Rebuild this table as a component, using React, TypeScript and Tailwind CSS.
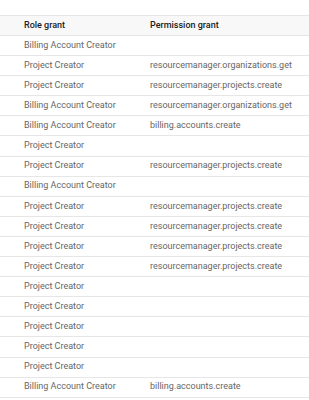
const rows: [string, string][] = [
  ['Billing Account Creator', ''],
  ['Project Creator', 'resourcemanager.organizations.get'],
  ['Project Creator', 'resourcemanager.projects.create'],
  ['Billing Account Creator', 'resourcemanager.organizations.get'],
  ['Billing Account Creator', 'billing.accounts.create'],
  ['Project Creator', ''],
  ['Project Creator', 'resourcemanager.projects.create'],
  ['Billing Account Creator', ''],
  ['Project Creator', 'resourcemanager.projects.create'],
  ['Project Creator', 'resourcemanager.projects.create'],
  ['Project Creator', 'resourcemanager.projects.create'],
  ['Project Creator', 'resourcemanager.projects.create'],
  ['Project Creator', ''],
  ['Project Creator', ''],
  ['Project Creator', ''],
  ['Project Creator', ''],
  ['Project Creator', ''],
  ['Billing Account Creator', 'billing.accounts.create'],
];

export default function App() {
  return (
    <div className="w-[309px] h-[400px] bg-white pt-[15px] overflow-hidden" style={{ fontFamily: 'Roboto, sans-serif' }}>
      <div className="flex h-[21px] items-center bg-[#f8f8f8] border-y border-[#e6e6e6] text-[9px] font-medium text-[#212121]">
        <div className="w-[150px] pl-[24px]">Role grant</div>
        <div>Permission grant</div>
      </div>
      {rows.map(([role, perm], i) => (
        <div key={i} className="flex h-[20.1px] items-center border-b border-[#e6e6e6] text-[9px] text-[#666666]">
          <div className="w-[150px] pl-[24px]">{role}</div>
          <div>{perm}</div>
        </div>
      ))}
    </div>
  );
}
